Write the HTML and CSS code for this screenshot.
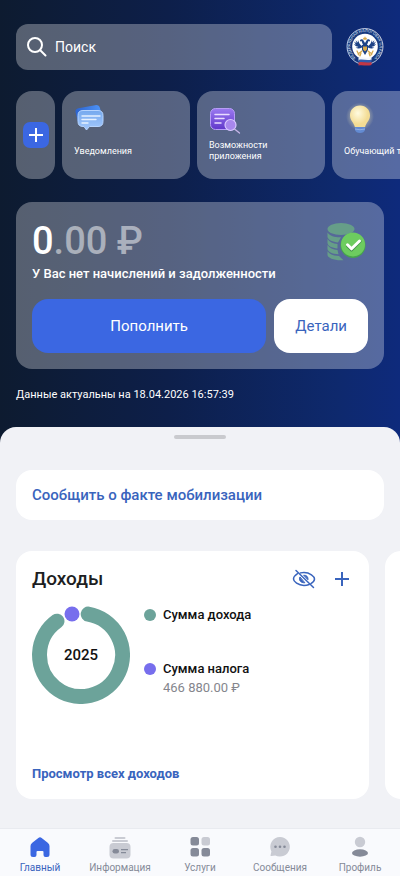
FILE: index.html
```html
<!DOCTYPE html>
<html lang="ru">
<head>
<meta charset="utf-8">
<meta name="viewport" content="width=device-width, initial-scale=1">
<title>Главный</title>
<link rel="stylesheet" href="styles.css">
</head>
<body>
<div class="app">
  <header class="hero">
    <div class="topbar">
      <label class="search">
        <svg width="20" height="20" viewBox="0 0 20 20" fill="none" stroke="#fff" stroke-width="2" stroke-linecap="round" aria-hidden="true"><circle cx="8" cy="8" r="7"/><path d="M13 13l5.500 5.500"/></svg>
        <input type="search" placeholder="Поиск" aria-label="Поиск">
      </label>
      <svg class="emblem" width="38" height="40" viewBox="0 0 38 40" role="img" aria-label="Федеральная налоговая служба">
        <defs><path id="ring" d="M10.630 31.460A14.600 14.600 0 1 1 27.370 31.460"/></defs>
        <circle cx="19" cy="19.500" r="18" fill="#17397f" stroke="#dfe6f4" stroke-width=".8"/>
        <circle cx="19" cy="19.500" r="12.800" fill="#fff"/>
        <text class="ring-text" text-anchor="middle"><textPath href="#ring" startOffset="50%">ФЕДЕРАЛЬНАЯ НАЛОГОВАЯ СЛУЖБА</textPath></text>
        <g fill="#1d4387">
          <path d="M17.500 13.500c-1-2-4-1.500-3.500 1l1.500-.5 1.500 4h4l1.500-4 1.500.5c.5-2.500-2.500-3-3.500-1L19 16z"/>
          <path d="M16 19c-2-1-3-3-4-6-.3 1-.2 1.800 0 2.500-1-.7-1.700-1.300-2.300-2.500 0 1.200.3 2.200 1 3-1-.2-1.700-.6-2.400-1.400.2 1.400.9 2.300 2 2.900-.8.200-1.500 0-2.300-.4.800 1.700 2.400 2.500 4.400 2.600-1 .8-1.800 1-2.800.9 2 1.400 4.400 1 6.400-.1zM22 19c2-1 3-3 4-6 .3 1 .2 1.800 0 2.500 1-.7 1.700-1.300 2.300-2.500 0 1.200-.3 2.200-1 3 1-.2 1.700-.6 2.400-1.400-.2 1.400-.9 2.300-2 2.900.8.200 1.500 0 2.300-.4-.8 1.700-2.400 2.500-4.400 2.600 1 .8 1.800 1 2.800.9-2 1.400-4.400 1-6.400-.1z"/>
          <path d="M16 18h6v5l-3 5-3-5z"/>
        </g>
        <path d="M17 10.500l1 .8 1-2 1 2 1-.8-.4 2.300h-3.200zM17 19.500h4v3l-2 2-2-2z" fill="#d7a849"/>
        <path d="M16 24l-4 3M22 24l4 3M11 24l2 4M27 24l-2 4M15 26l-1 3M23 26l1 3" stroke="#d7a849" stroke-width="1.200" stroke-linecap="round"/>
        <path d="M12.500 31c3-2 7 1 13-1v3c-6 2-10-1-13 1z" fill="#f4f6fb"/>
        <path d="M12.500 33c4-1.500 8 1 13-.5v3c-5 1.500-9-1-13 .5z" fill="#315cad"/>
        <path d="M12.500 35.500c4-1.500 8 1 13-.5v3c-5 1.500-9-.5-13 .5z" fill="#c23745"/>
      </svg>
    </div>

    <div class="tiles">
      <button class="tile tile-add" aria-label="Добавить">
        <span class="add-mark"><svg width="14" height="14" viewBox="0 0 14 14" stroke="#fff" stroke-width="2" aria-hidden="true"><path d="M7 0v14M0 7h14"/></svg></span>
      </button>
      <button class="tile">
        <svg width="32" height="32" viewBox="0 0 32 32" aria-hidden="true">
          <defs><linearGradient id="back" x2="1"><stop stop-color="#2c63cf"/><stop offset="1" stop-color="#4f95f8"/></linearGradient><linearGradient id="bubble" x2="0" y2="1"><stop stop-color="#75a9ee"/><stop offset="1" stop-color="#a4c8fc"/></linearGradient></defs>
          <path d="M1.500 9q-.3-3 3-3.700L21 2.200q4-.7 5 3l2 8-20 8q-4-1-4.500-4z" fill="url(#back)"/>
          <path d="M9 7.500h15q5 0 5 5v6q0 5-5 5H15.500L12.500 27l-2.500-3.500H9q-5 0-5-5v-6q0-5 5-5z" fill="url(#bubble)" stroke="#b5d4ff"/>
          <path d="M8 13H26M8 16.500H22M8 20H14" stroke="#e5f1ff" stroke-width="1.400" stroke-linecap="round"/>
        </svg>
        <span class="tile-label">Уведомления</span>
      </button>
      <button class="tile">
        <svg width="32" height="32" viewBox="0 0 32 32" aria-hidden="true">
          <defs><linearGradient id="purple" x2="0" y2="1"><stop stop-color="#9b7af1"/><stop offset="1" stop-color="#6037ca"/></linearGradient></defs>
          <rect x="1.500" y="5.500" width="24" height="21" rx="5" fill="url(#purple)" stroke="#b79df7"/>
          <path d="M6 11.500h14M6 15.500h9M6 20h6" stroke="#e9ddff" stroke-width="1.500" stroke-linecap="round"/>
          <circle cx="21.500" cy="22" r="5.500" fill="#a887ed" stroke="#d9c8ff" stroke-width="1.200"/>
          <path d="M25.500 26l5 4" stroke="#c8b6e8" stroke-width="1.300" stroke-linecap="round"/>
        </svg>
        <span class="tile-label">Возможности приложения</span>
      </button>
      <button class="tile">
        <svg width="32" height="32" viewBox="0 0 32 32" aria-hidden="true">
          <defs><radialGradient id="glow"><stop offset=".6" stop-color="#fff2b5" stop-opacity=".35"/><stop offset="1" stop-color="#fff2b5" stop-opacity="0"/></radialGradient><radialGradient id="bulb" cx=".4" cy=".35"><stop stop-color="#fffbe0"/><stop offset="1" stop-color="#f3dc94"/></radialGradient></defs>
          <circle cx="16" cy="13.500" r="14" fill="url(#glow)"/>
          <path d="M16 2.500c6 0 10 4.400 10 10 0 5-4 7-5 12H11c-1-5-5-7-5-12 0-5.600 4-10 10-10z" fill="url(#bulb)"/>
          <path d="M11 24h10v3q-1 3-5 3t-5-3z" fill="#638bd2"/><path d="M11 26q5 1.500 10 0" stroke="#91afe4" fill="none"/>
        </svg>
        <span class="tile-label">Обучающий тур</span>
      </button>
    </div>

    <section class="balance">
      <div class="balance-head">
        <div>
          <div class="amount">0<span class="amount-rest">.00 ₽</span></div>
          <p class="balance-note">У Вас нет начислений и задолженности</p>
        </div>
        <svg class="coins" width="40" height="40" viewBox="0 0 40 40" aria-hidden="true">
          <g fill="#669e88">
            <ellipse cx="14" cy="7" rx="13.500" ry="6"/>
            <path d="M.5 10.500C3 14 8 15.500 14 15.300l-3 5.200C6 20 1 18 .5 15zM.5 17c2 3 5.500 4.600 10 5v4.500C5 26 .7 24 .5 21zM.5 23c2 3 5.500 4.600 10 5l1 4.300C5 32 .7 29.500.5 27zM.5 29.300c2 3 6 4.500 11.500 4.700l4.500 4.200C8 39 .7 36 .5 33z"/>
          </g>
          <circle cx="26" cy="23.500" r="12.500" fill="#47a44d"/><circle cx="26" cy="22.500" r="12" fill="#6dcc5f"/>
          <path d="M20.500 24l4 4 8.500-8.500" fill="none" stroke="#418f48" stroke-width="3" stroke-linecap="round" stroke-linejoin="round"/>
          <path d="M20.500 22.800l4 4L32.500 19" fill="none" stroke="#fff" stroke-width="3" stroke-linecap="round" stroke-linejoin="round"/>
        </svg>
      </div>
      <div class="balance-actions">
        <button class="btn btn-primary">Пополнить</button>
        <button class="btn btn-light">Детали</button>
      </div>
    </section>
    <p class="updated">Данные актуальны на 18.04.2026 16:57:39</p>
  </header>

  <main class="sheet">
    <div class="handle"></div>
    <a class="notice" href="#">Сообщить о факте мобилизации</a>
    <div class="cards">
      <section class="card">
        <div class="card-head">
          <h2>Доходы</h2>
          <button class="icon-btn" aria-label="Скрыть суммы">
            <svg width="24" height="20" viewBox="0 0 24 20" fill="none" stroke="#3964bd" stroke-width="1.500" stroke-linecap="round" aria-hidden="true"><path d="M5.500 4.700C3.200 6.200 1.500 8.500 1.500 10c0 2.600 4.700 6.500 10.500 6.500 2 0 3.700-.4 5.200-1M8.500 3.900c1.100-.3 2.300-.4 3.500-.4 5.800 0 10.500 3.900 10.500 6.500 0 1.500-1.400 3.300-3.600 4.600"/><path d="M4 1.500l17.500 17"/><path d="M7.800 8.300c-1.300 3 1 5.700 4.700 5.500zM12 6.200c2.800 0 4.300 1.700 4 4.200z" fill="#3964bd" stroke-width="1" stroke-linejoin="round"/></svg>
          </button>
          <button class="icon-btn" aria-label="Добавить доход">
            <svg width="14" height="14" viewBox="0 0 14 14" stroke="#3964bd" stroke-width="2" aria-hidden="true"><path d="M7 0v14M0 7h14"/></svg>
          </button>
        </div>
        <div class="income">
          <svg class="donut" width="98" height="98" viewBox="0 0 98 98" role="img" aria-label="Доходы за 2025 год">
            <path d="M56.200 8.130A41.500 41.500 0 1 1 24.960 15.190" fill="none" stroke="#6ca39a" stroke-width="15" stroke-linecap="round"/>
            <circle cx="40" cy="8" r="7.500" fill="#776eed"/>
            <text class="donut-year" x="49" y="54" text-anchor="middle">2025</text>
          </svg>
          <ul class="legend">
            <li class="legend-item"><span class="dot dot-income"></span><span class="legend-name">Сумма дохода</span></li>
            <li class="legend-item"><span class="dot dot-tax"></span><span class="legend-name">Сумма налога</span><span class="legend-value">466 880.00 ₽</span></li>
          </ul>
        </div>
        <a class="card-link" href="#">Просмотр всех доходов</a>
      </section>
      <section class="card"></section>
    </div>
  </main>

  <nav class="tabs">
    <a class="tab tab-active" href="#">
      <svg width="24" height="24" viewBox="0 0 24 24" aria-hidden="true"><path d="M10.300 3q1.700-1.400 3.400 0l6 4.800Q21.500 9.200 21.500 11v8.500q0 2.500-2.500 2.500h-1.500q-2 0-2-2v-3q0-1-1-1h-5q-1 0-1 1v3q0 2-2 2H5q-2.500 0-2.500-2.500V11q0-1.800 1.800-3.200z" fill="#3b67e2"/></svg>
      Главный
    </a>
    <a class="tab" href="#">
      <svg width="24" height="24" viewBox="0 0 24 24" aria-hidden="true"><g fill="#c9cbd3"><rect x="6.500" y="2" width="11" height="2" rx="1"/><rect x="4" y="5" width="16" height="2" rx="1"/><rect x="1.500" y="8" width="21" height="15.500" rx="4"/></g><rect x="4.500" y="14" width="6.500" height="4.500" rx="2.200" fill="#858a98"/><path d="M13 14.700h7M13 17.700h5" stroke="#858a98" stroke-width="1.300"/></svg>
      Информация
    </a>
    <a class="tab" href="#">
      <svg width="24" height="24" viewBox="0 0 24 24" aria-hidden="true"><g fill="#858a98"><rect x="2.500" y="2" width="8.500" height="8.500" rx="2.500"/><rect x="2.500" y="13" width="8.500" height="8.500" rx="2.500"/><rect x="13.500" y="13" width="8.500" height="8.500" rx="2.500"/></g><rect x="13.500" y="2" width="8.500" height="8.500" rx="2.500" fill="#c9cbd3"/></svg>
      Услуги
    </a>
    <a class="tab" href="#">
      <svg width="24" height="24" viewBox="0 0 24 24" aria-hidden="true"><path d="M12 2a9.800 9.800 0 1 1-4.700 18.400L3.500 21q-1.200.1-.9-1l.8-3.600A9.800 9.800 0 0 1 12 2z" fill="#c9cbd3"/><g fill="#858a98"><circle cx="7.500" cy="11.800" r="1.300"/><circle cx="12" cy="11.800" r="1.300"/><circle cx="16.500" cy="11.800" r="1.300"/></g></svg>
      Сообщения
    </a>
    <a class="tab" href="#">
      <svg width="24" height="24" viewBox="0 0 24 24" aria-hidden="true"><circle cx="12" cy="7" r="5.200" fill="#c9cbd3"/><ellipse cx="12" cy="18" rx="8" ry="3.700" fill="#858a98"/></svg>
      Профиль
    </a>
  </nav>
</div>
</body>
</html>
```
FILE: styles.css
```css
* { box-sizing: border-box; }
body {
  margin: 0;
  background: #f1f2f6;
  font-family: Roboto, "Liberation Sans", sans-serif;
  color: #1d1e22;
}
button { border: 0; font: inherit; cursor: pointer; }
a { text-decoration: none; }
p, h2, ul { margin: 0; padding: 0; }
svg { display: block; flex: none; }

.app {
  min-height: 100vh;
  display: flex;
  flex-direction: column;
  overflow-x: hidden;
}

.hero {
  padding: 24px 16px 44px;
  background: linear-gradient(90deg, #0d1b30 0%, #0d1f4a 42%, #0e296e 85%, #0e2a7c 100%);
  color: #fff;
}
.topbar { display: flex; align-items: center; gap: 14px; }
.search {
  flex: 1;
  min-width: 0;
  height: 46px;
  padding: 0 11px;
  display: flex;
  align-items: center;
  gap: 8px;
  border-radius: 12px;
  background: rgba(255, 255, 255, .3);
}
.search input {
  flex: 1;
  min-width: 0;
  padding: 0;
  border: 0;
  outline: 0;
  appearance: none;
  background: none;
  color: #fff;
  font: 14px/20px Roboto, sans-serif;
}
.search input::placeholder { color: #fff; opacity: 1; }
.ring-text { font-size: 4px; fill: #dfe6f4; }

.tiles {
  display: flex;
  gap: 7px;
  margin: 21px -16px 0 0;
  overflow: hidden;
}
.tile {
  flex: none;
  width: 128px;
  height: 88px;
  padding: 12px;
  display: flex;
  flex-direction: column;
  align-items: flex-start;
  border-radius: 16px;
  background: rgba(255, 255, 255, .3);
  color: #fff;
  text-align: left;
}
.tile-add { width: 39px; padding: 0; align-items: center; justify-content: center; }
.add-mark {
  width: 26px;
  height: 26px;
  display: grid;
  place-items: center;
  border-radius: 7px;
  background: #3b67e2;
}
.tile-label {
  flex: 1;
  display: flex;
  align-items: center;
  font-size: 9px;
  line-height: 11px;
}

.balance {
  margin-top: 23px;
  padding: 16px;
  border-radius: 16px;
  background: rgba(255, 255, 255, .3);
}
.balance-head { display: flex; justify-content: space-between; }
.amount { font-size: 38px; line-height: 47px; font-weight: 500; }
.amount-rest { color: rgba(255, 255, 255, .5); }
.balance-note { font-size: 13px; line-height: 18px; font-weight: 500; }
.coins { margin: 4px 1px 0 0; }
.balance-actions { display: flex; gap: 8px; margin-top: 16px; }
.btn { height: 54px; padding: 0; border-radius: 16px; font-size: 15px; }
.btn-primary { flex: 5; background: #3b67e2; color: #fff; }
.btn-light { flex: 2; background: #fff; color: #3964bd; }
.updated { margin-top: 18px; font-size: 11px; line-height: 16px; }

.sheet {
  flex: 1;
  margin-top: -20px;
  padding: 8px 16px 29px;
  border-radius: 16px 16px 0 0;
  background: #f1f2f6;
}
.handle { width: 52px; height: 4px; margin: 0 auto 31px; border-radius: 2px; background: #c9cace; }
.notice {
  display: block;
  padding: 15px 16px;
  border-radius: 16px;
  background: #fff;
  color: #3964bd;
  font-size: 15px;
  line-height: 20px;
  font-weight: 500;
}
.cards {
  display: flex;
  gap: 16px;
  margin: 31px -16px 0 0;
  overflow: hidden;
}
.card {
  flex: none;
  width: calc(100% - 31px);
  min-height: 248px;
  padding: 16px;
  display: flex;
  flex-direction: column;
  border-radius: 16px;
  background: #fff;
}
.card-head { display: flex; align-items: center; gap: 8px; margin-right: -4px; }
.card-head h2 { flex: 1; font-size: 19px; line-height: 23px; font-weight: 500; }
.icon-btn {
  width: 30px;
  height: 23px;
  padding: 0;
  display: grid;
  place-items: center;
  background: none;
}
.income { display: flex; gap: 14px; margin-top: 16px; }
.donut-year { font-size: 15px; font-weight: 500; fill: #111; }
.legend { list-style: none; display: grid; gap: 36px; align-content: start; }
.legend-item {
  display: grid;
  grid-template-columns: 12px auto;
  column-gap: 7px;
  align-items: center;
  line-height: 18px;
}
.dot { width: 12px; height: 12px; border-radius: 50%; }
.dot-income { background: #6ca39a; }
.dot-tax { background: #776eed; }
.legend-name { font-size: 13px; font-weight: 500; color: #111; }
.legend-value { grid-column: 2; font-size: 13px; line-height: 20px; color: #85868d; }
.card-link {
  margin-top: auto;
  color: #3964bd;
  font-size: 13px;
  line-height: 18px;
  font-weight: 700;
}

.tabs {
  position: sticky;
  bottom: 0;
  display: grid;
  grid-template-columns: repeat(5, 1fr);
  padding: 6px 0 1px;
  border-top: 1px solid #e9ebf0;
  background: #f9fafd;
}
.tab {
  display: flex;
  flex-direction: column;
  align-items: center;
  gap: 2px;
  font-size: 10px;
  line-height: 14px;
  color: #858a98;
}
.tab-active { color: #3964bd; }
```
